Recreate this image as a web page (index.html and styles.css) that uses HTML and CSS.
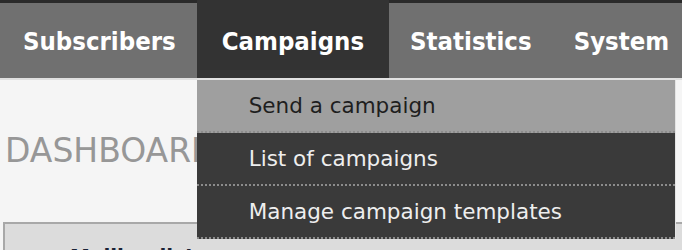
FILE: index.html
```html
<!DOCTYPE html>
<html lang="en">
<head>
<meta charset="utf-8">
<title>Dashboard</title>
<link rel="stylesheet" href="styles.css">
</head>
<body>
<header class="topbar">
  <nav class="nav">
    <a class="nav-item" href="#">Subscribers</a>
    <div class="nav-item active">
      <span>Campaigns</span>
      <ul class="dropdown">
        <li class="dropdown-item hover">Send a campaign</li>
        <li class="dropdown-item">List of campaigns</li>
        <li class="dropdown-item">Manage campaign templates</li>
      </ul>
    </div>
    <a class="nav-item" href="#">Statistics</a>
    <a class="nav-item" href="#">System</a>
  </nav>
</header>
<main class="content">
  <h1 class="title">DASHBOARD</h1>
  <section class="panel">
    <h2 class="panel-title">Mailing lists</h2>
  </section>
</main>
</body>
</html>
```

FILE: styles.css
```css
html, body {
  margin: 0;
  padding: 0;
}
body {
  background: #f5f5f5;
  font-family: "DejaVu Sans", Verdana, sans-serif;
  overflow: hidden;
  width: 682px;
  height: 250px;
}
.topbar {
  border-top: 3px solid #2a2a2a;
  background: #707070;
  border-bottom: 2px solid #e0e0e0;
}
.nav {
  display: flex;
  height: 75px;
  padding-left: 2px;
}
.nav-item {
  position: relative;
  display: flex;
  align-items: center;
  padding: 0 21px;
  color: #ffffff;
  text-decoration: none;
  font-family: "DejaVu Sans", "Liberation Sans", sans-serif;
  font-stretch: condensed;
  font-weight: bold;
  font-size: 25.5px;
  white-space: nowrap;
}
.nav-item.active {
  background: #333333;
  margin-top: -3px;
  padding: 3px 25px 0 25px;
}
.dropdown {
  position: absolute;
  top: 100%;
  left: 0;
  width: 479px;
  box-sizing: border-box;
  margin: 0;
  padding: 0;
  list-style: none;
  background: #3a3a3a;
  border-top: 2px solid #e2e2e2;
  border-right: 1px solid #e4e4e4;
  z-index: 5;
}
.dropdown-item {
  display: flex;
  align-items: center;
  height: 51px;
  padding-left: 52px;
  border-bottom: 2px dotted #8c8c8c;
  color: #eeeeee;
  font-family: "DejaVu Sans", Verdana, sans-serif;
  font-stretch: normal;
  font-weight: normal;
  font-size: 21.5px;
}
.dropdown-item.hover {
  background: #9f9f9f;
  color: #1e1e1e;
}
.content {
  padding: 0 0 0 3px;
}
.title {
  margin: 52px 0 0 2px;
  font-weight: normal;
  font-size: 33px;
  line-height: 38px;
  color: #979797;
}
.panel {
  margin-top: 52px;
  border: 2px solid #a8a8a8;
  border-right: none;
  background: #dcdcdc;
  height: 60px;
  padding: 20px 0 0 65px;
}
.panel-title {
  margin: 0;
  font-size: 20px;
  line-height: 24px;
  color: #1a2235;
}
```
